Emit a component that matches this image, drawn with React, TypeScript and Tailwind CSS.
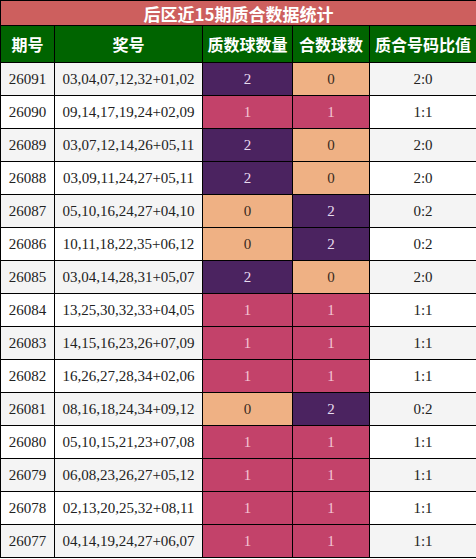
const rows: [string, string, number, number][] = [
  ["26091", "03,04,07,12,32+01,02", 2, 0],
  ["26090", "09,14,17,19,24+02,09", 1, 1],
  ["26089", "03,07,12,14,26+05,11", 2, 0],
  ["26088", "03,09,11,24,27+05,11", 2, 0],
  ["26087", "05,10,16,24,27+04,10", 0, 2],
  ["26086", "10,11,18,22,35+06,12", 0, 2],
  ["26085", "03,04,14,28,31+05,07", 2, 0],
  ["26084", "13,25,30,32,33+04,05", 1, 1],
  ["26083", "14,15,16,23,26+07,09", 1, 1],
  ["26082", "16,26,27,28,34+02,06", 1, 1],
  ["26081", "08,16,18,24,34+09,12", 0, 2],
  ["26080", "05,10,15,21,23+07,08", 1, 1],
  ["26079", "06,08,23,26,27+05,12", 1, 1],
  ["26078", "02,13,20,25,32+08,11", 1, 1],
  ["26077", "04,14,19,24,27+06,07", 1, 1],
];

function cellColor(n: number) {
  if (n === 2) return "bg-[#4b2360] text-[#e8dcef]";
  if (n === 1) return "bg-[#c3426a] text-[#f3c6d4]";
  return "bg-[#efb184] text-[#3a2a20]";
}

export default function App() {
  return (
    <div className="w-[476px] h-[559px] bg-white" style={{ fontFamily: '"Liberation Serif", "Noto Sans CJK SC", serif' }}>
      <table className="w-[476px] border-collapse table-fixed text-[15px] text-[#222]">
        <colgroup>
          <col className="w-[54px]" />
          <col className="w-[148px]" />
          <col className="w-[90px]" />
          <col className="w-[77px]" />
          <col className="w-[107px]" />
        </colgroup>
        <thead>
          <tr className="h-[25px]">
            <th colSpan={5} className="border border-black bg-[#cd5f5e] text-white text-[17px] font-bold leading-none" style={{ fontFamily: '"Noto Sans CJK SC", sans-serif' }}>
              后区近15期质合数据统计
            </th>
          </tr>
          <tr className="h-[37px] bg-[#006400] text-white text-[16px] font-bold" style={{ fontFamily: '"Noto Sans CJK SC", sans-serif' }}>
            <th className="border border-black font-bold">期号</th>
            <th className="border border-black font-bold">奖号</th>
            <th className="border border-black font-bold">质数球数量</th>
            <th className="border border-black font-bold">合数球数</th>
            <th className="border border-black font-bold">质合号码比值</th>
          </tr>
        </thead>
        <tbody>
          {rows.map(([id, nums, p, c], i) => (
            <tr key={id} className={`h-[33px] ${i % 2 === 0 ? "bg-[#f4f4f4]" : "bg-white"}`}>
              <td className="border border-black text-center">{id}</td>
              <td className="border border-black text-center">{nums}</td>
              <td className={`border border-black text-center ${cellColor(p)}`}>{p}</td>
              <td className={`border border-black text-center ${cellColor(c)}`}>{c}</td>
              <td className="border border-black text-center">{p}:{c}</td>
            </tr>
          ))}
        </tbody>
      </table>
    </div>
  );
}
